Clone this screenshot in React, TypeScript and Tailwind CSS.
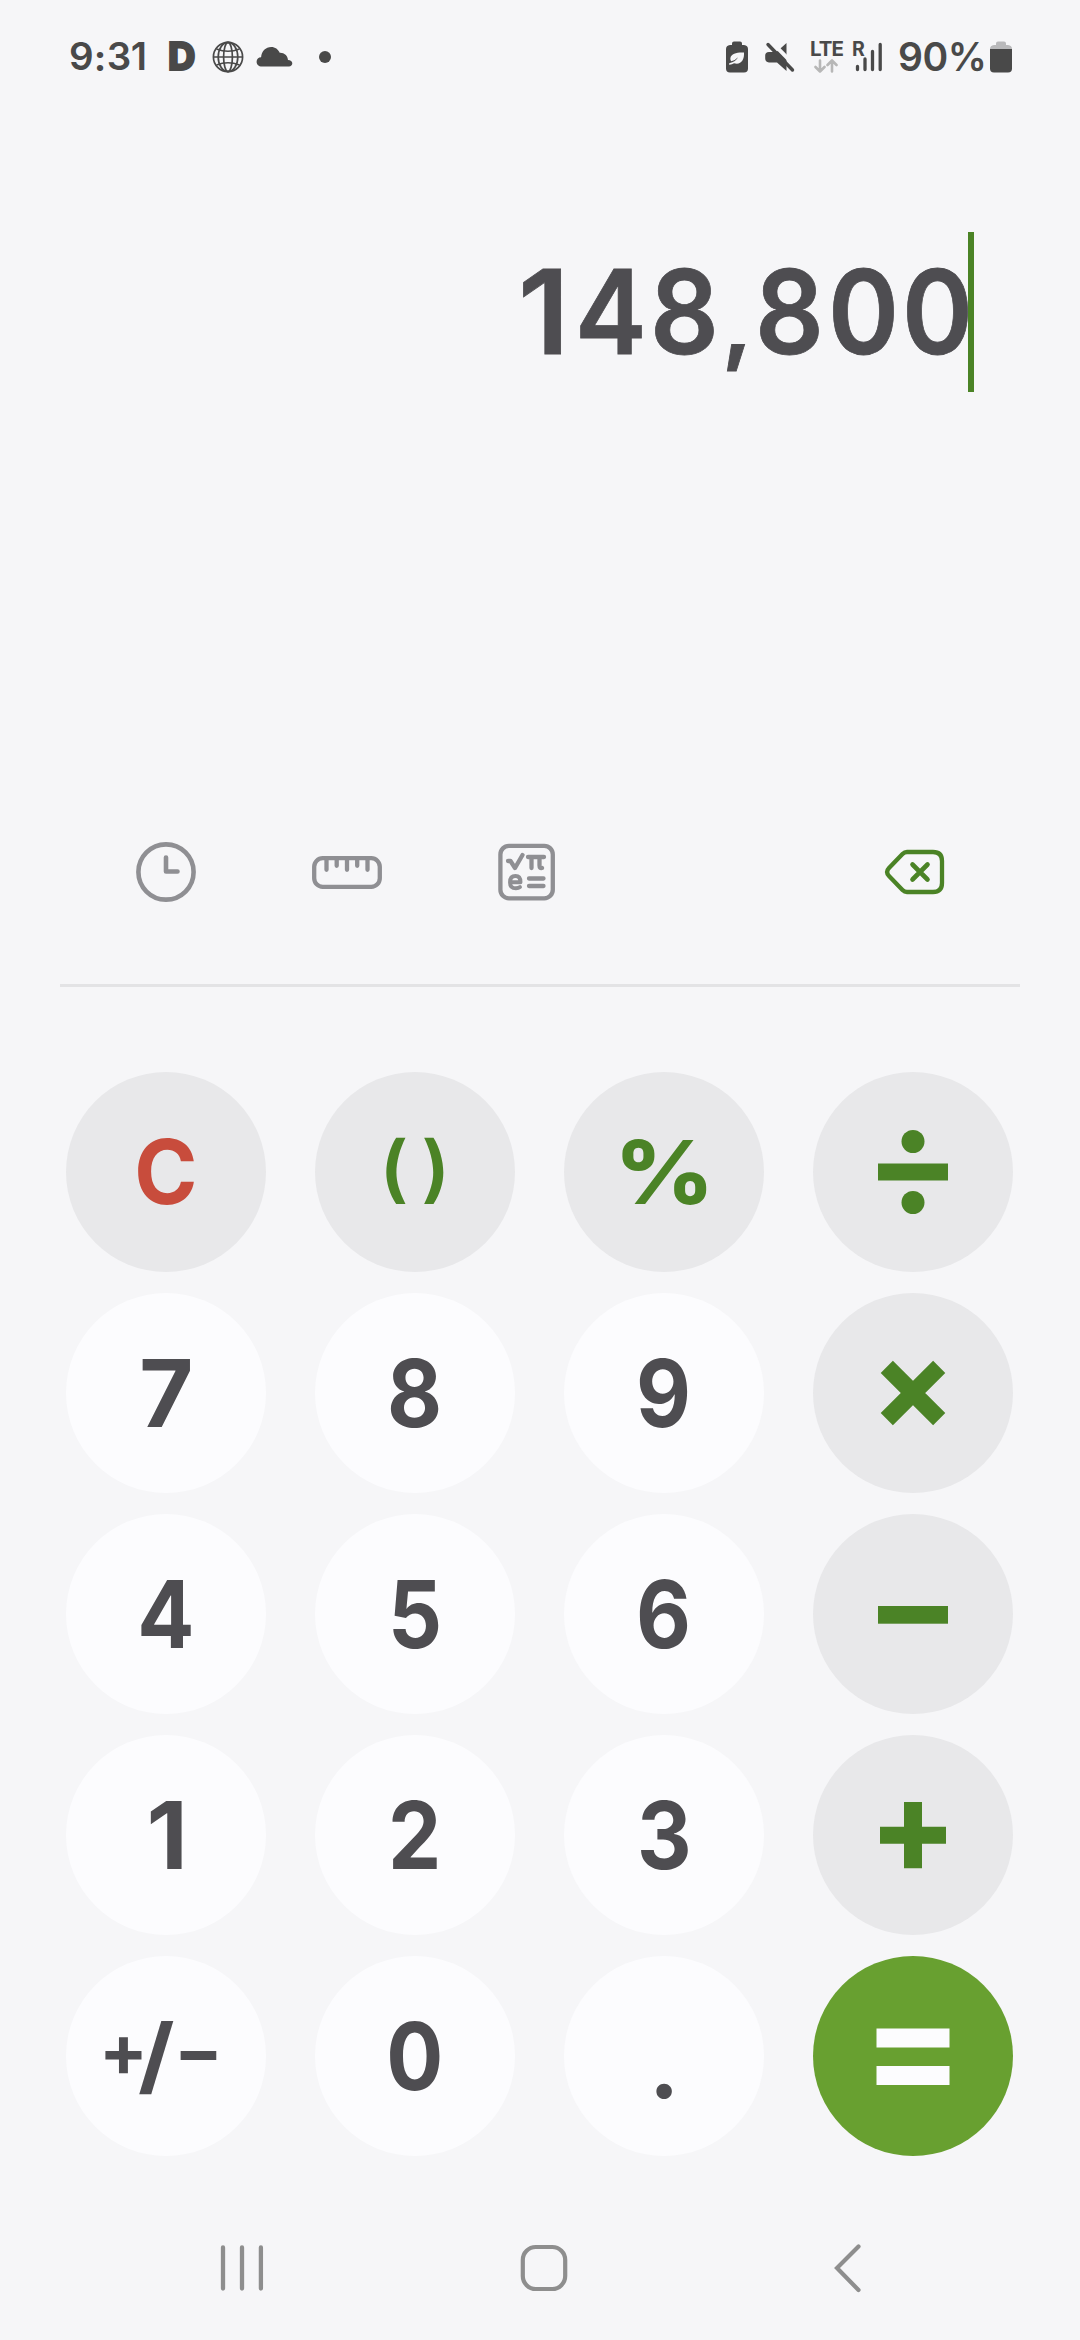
import type { ReactNode } from "react";

function StatusBar() {
  return (
    <header className="flex h-[113px] items-center justify-between pr-[68px] pl-[69px] text-[#494949]">
      <div className="flex items-center">
        <div className="flex w-[99px] items-center text-[38.5px] leading-[113px] font-semibold">
          <span>9</span>
          <span className="w-[13px] text-center font-['Lato',sans-serif] font-black">:</span>
          <span className="tracking-[-0.5px]">31</span>
        </div>
        <span className="w-[44px] text-[38px] leading-[113px] font-extrabold [-webkit-text-stroke:2px_#494949]">D</span>
        <svg className="h-[32px] w-[32px]" viewBox="0 0 32 32" fill="none" stroke="currentColor" strokeWidth="1.7">
          <circle cx="16" cy="16" r="14.6" />
          <ellipse cx="16" cy="16" rx="9.8" ry="14.6" />
          <ellipse cx="16" cy="16" rx="4.4" ry="14.6" />
          <path d="M1.4 16H30.6M4.5 8Q16 12.5 27.5 8M4.5 24Q16 19.5 27.5 24" />
        </svg>
        <svg className="ml-[12px] h-[22px] w-[37px]" viewBox="0 0 37 22" fill="currentColor">
          <path d="M6 20.500C2.500 20.500 .6 18.300 .6 15.700C.6 13 2.500 11.300 5.100 11.200C5.600 5.200 9.700 1 15.200 1C19.200 1 22.200 3.400 23.700 6.800C28 6.500 31.700 9.600 32 13.900C34.500 14 36.300 15.300 36.300 17.300C36.300 19.300 34.900 20.500 33 20.500Z" />
        </svg>
        <span className="ml-[26px] h-[12px] w-[12px] rounded-full bg-current" />
      </div>

      <div className="flex items-center">
        <svg className="h-[32px] w-[22px]" viewBox="0 0 22 32">
          <path d="M6 4V2.500Q6 .5 8 .5H14Q16 .5 16 2.500V4H18Q22 4.500 22 8V27.500Q22 31.500 18 31.500H4Q0 31.500 0 27.500V8Q0 4.500 4 4Z" fill="currentColor" />
          <path d="M18 11.500C11 11.200 5.300 12.300 4.400 17C4.200 18.600 4.700 19.500 5.300 20.300Q9 19.600 12 16.200Q10 20.600 3.200 22.300V23.700Q6 23.800 8 22.300C15 24.200 18.500 19 18 11.500Z" fill="#f6f6f8" />
        </svg>
        <svg className="ml-[17px] h-[32px] w-[32px]" viewBox="0 0 32 32">
          <path d="M21.500 2V30L12 21.500H4Q.2 21 .2 17.500V14.500Q.2 11 4 11H11.500Z" fill="currentColor" />
          <path d="M5.800 .2L31 25.800" stroke="#f6f6f8" strokeWidth="4" />
          <path d="M3 3.500L27.500 29" stroke="currentColor" strokeWidth="3.400" strokeLinecap="round" />
        </svg>
        <div className="ml-[13px] flex h-[32px] w-[36px] flex-col">
          <span className="text-[20.500px] leading-[16px] font-bold tracking-[-1px]">LTE</span>
          <svg className="mt-[2px] ml-[4px] h-[14px] w-[24px]" viewBox="0 0 24 14" fill="none" stroke="#b7b7b7" strokeWidth="2.600" strokeLinecap="round" strokeLinejoin="round">
            <path d="M6 1.500V12.500M1.500 8L6 12.500L10.500 8M18 12.500V1.500M13.500 6L18 1.500L22.500 6" />
          </svg>
        </div>
        <div className="relative ml-[6px] h-[32px] w-[32px]">
          <span className="absolute top-0 left-0 text-[19.500px] leading-[17px] font-bold">R</span>
          <svg className="h-[32px] w-[32px]" viewBox="0 0 32 32" stroke="currentColor" strokeWidth="3.300" strokeLinecap="round">
            <path d="M5.500 25.500V28.500M13 18V28.500M20.500 10.500V28.500M28.200 3.500V28.500" />
          </svg>
        </div>
        <span className="ml-[14px] w-[92px] text-[39px] leading-[113px] font-semibold tracking-[-0.5px] whitespace-nowrap">90%</span>
        <svg className="h-[32px] w-[22px]" viewBox="0 0 22 32">
          <path d="M6 4V2.500Q6 .5 8 .5H14Q16 .5 16 2.500V4H18Q22 4.500 22 8H0Q0 4.500 4 4Z" fill="#b9b9bb" />
          <path d="M0 8H22V27.500Q22 31.500 18 31.500H4Q0 31.500 0 27.500Z" fill="currentColor" />
        </svg>
      </div>
    </header>
  );
}

const cell = "flex w-[73.7px] justify-center";
const glyph = "scale-x-[0.92]";

function Display() {
  return (
    <section className="flex h-[729px] items-start justify-end pt-[119px] pr-[106px]">
      <div className="flex h-[160px] text-[117px] leading-[160px] font-semibold text-[#4e4d51] [-webkit-text-stroke:0.8px_#4e4d51]">
        <span className={cell}><span className="ml-[13px] scale-x-[1.04]">1</span></span>
        <span className={cell}><span className={glyph}>4</span></span>
        <span className={cell}><span className={glyph}>8</span></span>
        <span className="flex w-[31.5px] justify-center"><span className="translate-y-[10px] scale-x-[1.1] text-[90px]">,</span></span>
        <span className={cell}><span className={glyph}>8</span></span>
        <span className={cell}><span className={glyph}>0</span></span>
        <span className={cell}><span className={glyph}>0</span></span>
        <span className="ml-[-6px] h-[160px] w-[6px] bg-[#4b8326]" />
      </div>
    </section>
  );
}

function Toolbar() {
  return (
    <section className="mx-[60px] flex h-[145px] items-start border-b-[3px] border-[#e3e3e5] text-[#8f8f93]">
      <svg className="ml-[76px] h-[60px] w-[60px]" viewBox="0 0 60 60" fill="none" stroke="currentColor" strokeLinecap="round" strokeLinejoin="round">
        <circle cx="30" cy="30" r="27.600" strokeWidth="4.600" />
        <path d="M30 15.500V29.500H41.500" strokeWidth="4.600" />
      </svg>
      <svg className="ml-[115px] h-[60px] w-[72px]" viewBox="0 0 72 60" fill="none" stroke="currentColor" strokeWidth="4.300" strokeLinecap="round">
        <rect x="3.200" y="16.200" width="65.600" height="28.600" rx="8.500" />
        <path d="M15.500 17V27.800M25.700 17V23.800M36 17V27.800M46.200 17V23.800M56.500 17V27.800" />
      </svg>
      <svg className="ml-[114px] h-[60px] w-[60px]" viewBox="0 0 60 60" fill="none" stroke="currentColor" strokeWidth="4.300" strokeLinecap="round" strokeLinejoin="round">
        <rect x="3.400" y="3.900" width="52.400" height="52.400" rx="8.500" />
        <path d="M11 19H13.500L18 26L25.500 13M31 15H47M34.500 15V26M42.500 15V23.500Q42.500 26.500 45 26M32 36.500H46.500M32 44H46.500" />
        <path d="M13 40.200H23.500Q23.500 34 18.500 34Q13 34 13 40.400Q13 46.300 19 46.300Q21.500 46.300 23 45" strokeWidth="3.900" />
      </svg>
      <svg className="ml-[326px] h-[60px] w-[64px]" viewBox="0 0 64 60" fill="none" stroke="#4b8326" strokeWidth="4.300" strokeLinecap="round" strokeLinejoin="round">
        <path d="M24 10H50Q59 10 59 19V41Q59 50 50 50H24Q21.500 50 19.500 48L6 34Q2.200 30 6 26L19.500 12Q21.500 10 24 10Z" />
        <path d="M29.500 22.500L44.500 37.500M44.500 22.500L29.500 37.500" strokeWidth="4.600" />
      </svg>
    </section>
  );
}

type Tone = "light" | "grey" | "green";
const tones: Record<Tone, string> = {
  light: "bg-[#fcfcfe] text-[#4e4d51]",
  grey: "bg-[#e8e8ea] text-[#4b8326]",
  green: "bg-[#68a030] text-[#fcfcfe]",
};

function Key({ tone = "light", label, children }: { tone?: Tone; label?: string; children: ReactNode }) {
  return (
    <button aria-label={label} className={`flex h-[200px] w-[200px] items-center justify-center rounded-full text-[94px] leading-[200px] font-bold ${tones[tone]}`}>
      {children}
    </button>
  );
}

function Digit({ children }: { children: ReactNode }) {
  return (
    <Key>
      <span className="scale-x-[0.9]">{children}</span>
    </Key>
  );
}

function Symbol({ children }: { children: ReactNode }) {
  return (
    <svg className="h-[100px] w-[100px]" viewBox="-50 -50 100 100" fill="currentColor">
      {children}
    </svg>
  );
}

function Keypad() {
  return (
    <main className="grid grid-cols-[repeat(4,200px)] gap-x-[49px] gap-y-[21px] pt-[85px] pl-[66px]">
      <Key tone="grey"><span className="scale-x-[0.96] text-[89px] text-[#c84c3c]">C</span></Key>
      <Key tone="grey"><span className="mr-[-12px] mb-[8px] scale-x-[1.07] text-[73px] font-semibold tracking-[12px]">()</span></Key>
      <Key tone="grey"><span className="scale-x-[1.1] text-[88px] font-extrabold">%</span></Key>
      <Key tone="grey" label="Divide">
        <Symbol><rect x="-35" y="-8.500" width="70" height="17" /><circle cy="-30.500" r="11.500" /><circle cy="30.500" r="11.500" /></Symbol>
      </Key>
      <Key><span className="scale-x-[0.99]">7</span></Key>
      <Digit>8</Digit>
      <Digit>9</Digit>
      <Key tone="grey" label="Multiply">
        <Symbol><path d="M-26.200 -26.200L26.200 26.200M26.200 -26.200L-26.200 26.200" stroke="currentColor" strokeWidth="17.200" /></Symbol>
      </Key>
      <Digit>4</Digit>
      <Digit>5</Digit>
      <Digit>6</Digit>
      <Key tone="grey" label="Minus">
        <Symbol><rect x="-35" y="-8" width="70" height="17.700" /></Symbol>
      </Key>
      <Key><span className="ml-[2px] scale-x-[1.02]">1</span></Key>
      <Digit>2</Digit>
      <Digit>3</Digit>
      <Key tone="grey" label="Plus">
        <Symbol><path d="M-9 -33H9V-8.300H33V8.800H9V33.300H-9V8.800H-33V-8.300H-9Z" /></Symbol>
      </Key>
      <Key>
        <span className="flex w-[24px] -translate-y-[6px] justify-center text-[72px]">+</span>
        <span className="flex w-[40.8px] -translate-y-[1px] justify-center text-[84px]"><span className="scale-x-[1.12]">/</span></span>
        <span className="flex w-[44.2px] -translate-y-[6px] justify-center text-[72px]">−</span>
      </Key>
      <Digit>0</Digit>
      <Key><span className="translate-y-[3px] font-['Lato',sans-serif] text-[102px]">.</span></Key>
      <Key tone="green" label="Equals">
        <Symbol><rect x="-36.500" y="-27.500" width="73" height="19" /><rect x="-36.500" y="10" width="73" height="19" /></Symbol>
      </Key>
    </main>
  );
}

function NavBar() {
  return (
    <nav className="mt-[78px] flex h-[68px] items-center text-[#8e8e8e]">
      <svg className="ml-[220px] h-[50px] w-[44px]" viewBox="0 0 44 50" stroke="currentColor" strokeWidth="4.300" strokeLinecap="round">
        <path d="M3 4.500V45.500M22 4.500V45.500M40.900 4.500V45.500" />
      </svg>
      <svg className="ml-[254px] h-[50px] w-[52px]" viewBox="0 0 52 50" fill="none" stroke="currentColor" strokeWidth="4.200">
        <rect x="4.800" y="4" width="42.400" height="42" rx="13" />
      </svg>
      <svg className="ml-[260px] h-[52px] w-[34px]" viewBox="0 0 34 52" fill="none" stroke="currentColor" strokeWidth="4.200" strokeLinecap="round">
        <path d="M28.500 4.500L7 26L28.500 48" />
      </svg>
    </nav>
  );
}

export default function App() {
  return (
    <div className="flex h-[2340px] w-[1080px] flex-col overflow-hidden bg-[#f6f6f8] font-['Inter',sans-serif]">
      <StatusBar />
      <Display />
      <Toolbar />
      <Keypad />
      <NavBar />
    </div>
  );
}
